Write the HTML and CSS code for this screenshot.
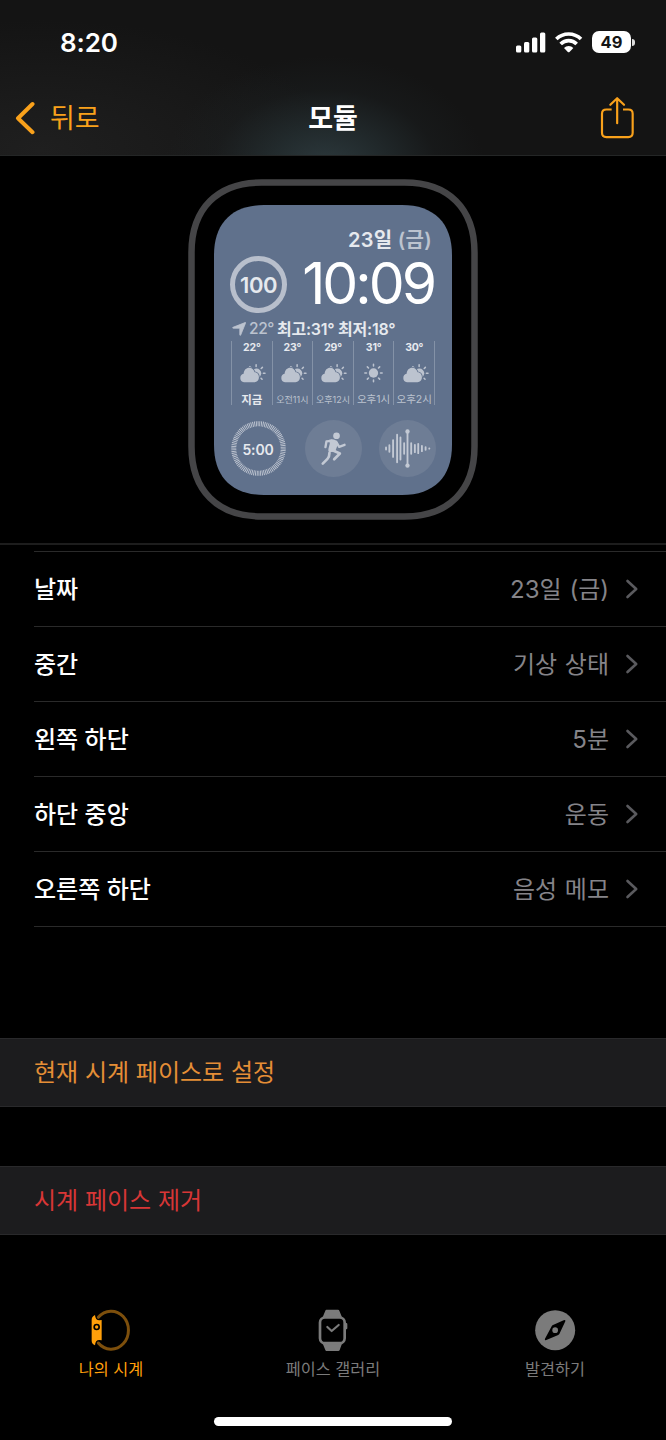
FILE: index.html
```html
<!DOCTYPE html>
<html lang="ko">
<head>
<meta charset="utf-8">
<title>모듈</title>
<link rel="stylesheet" href="styles.css">
</head>
<body>
<svg class="defs" width="0" height="0">
  <defs>
    <symbol id="cloud-sun" viewBox="178 68 82 60">
      <circle cx="231" cy="99" r="14.500" fill="currentColor"/>
      <g stroke="currentColor" stroke-width="4.600" stroke-linecap="round">
        <path d="M230 73v5M211 79l3.500 3.500M249 81l-3.500 3.500M257 99h-5M248 117l-3-3"/>
      </g>
      <path d="M193 126a13 13 0 0 1-1-25.500c1-12 8-18.500 17-18.500 8 0 14 5 16.500 14 8 0 13 7 13 15s-5.500 15-13.500 15z" fill="currentColor" stroke="#60718c" stroke-width="5" paint-order="stroke"/>
    </symbol>
    <symbol id="sun" viewBox="550 68 60 60">
      <circle cx="580" cy="98" r="14" fill="currentColor"/>
      <g stroke="currentColor" stroke-width="4.600" stroke-linecap="round">
        <path d="M580 72v5M580 119v5M554 98h5M601 98h5M561.500 79.500l3.500 3.500M595 113l3.500 3.500M598.500 79.500l-3.500 3.500M565 113l-3.500 3.500"/>
      </g>
    </symbol>
    <symbol id="chevron" viewBox="0 0 14 20">
      <path d="M2.500 2l8.700 8-8.700 8" fill="none" stroke="currentColor" stroke-width="2.600" stroke-linecap="round" stroke-linejoin="round"/>
    </symbol>
  </defs>
</svg>

<div class="screen">
  <header class="top">
    <div class="status">
      <span class="clock">8:20</span>
      <div class="indicators">
        <svg class="signal" viewBox="0 0 30 21">
          <g fill="#fff"><rect x="0" y="13.500" width="5.300" height="7" rx="1.500"/><rect x="8" y="10" width="5.300" height="10.500" rx="1.500"/><rect x="16" y="5.500" width="5.300" height="15" rx="1.500"/><rect x="24" y="0.500" width="5.300" height="20" rx="1.500"/></g>
        </svg>
        <svg class="wifi" viewBox="665 92 84 66">
          <g fill="none" stroke="#fff" stroke-width="11">
            <path d="M669 116a53 53 0 0 1 74 0"/><path d="M682 131a34 34 0 0 1 48 0"/>
          </g>
          <path d="M692 143a19 19 0 0 1 28 0l-11.500 12q-2.500 2-5 0z" fill="#fff"/>
        </svg>
        <div class="battery"><span class="level">49</span><i class="cap"></i></div>
      </div>
    </div>
    <nav class="nav">
      <div class="back">
        <svg class="back-icon" viewBox="0 0 20 34"><path d="M17.500 3L3 17.200l14.500 14" fill="none" stroke="currentColor" stroke-width="4" stroke-linecap="round" stroke-linejoin="round"/></svg>
        <span>뒤로</span>
      </div>
      <h1 class="title">모듈</h1>
      <svg class="share" viewBox="802 286 102 128">
        <g fill="none" stroke="currentColor" stroke-width="6.500" stroke-linecap="round" stroke-linejoin="round">
          <path d="M837 326h-16q-13 0-13 13v57q0 13 13 13h66q13 0 13-13v-57q0-13-13-13h-16" stroke-linecap="butt"/>
          <path d="M853.500 367v-74M833 312l20.500-20 20.500 20"/>
        </g>
      </svg>
    </nav>
  </header>

  <section class="preview">
    <div class="watch">
      <svg class="case" viewBox="0 0 290 341">
        <path d="M3.500 73.500C3.500 29.500 29.500 3.500 73.500 3.500H216.500C260.500 3.500 286.500 29.500 286.500 73.500V267.500C286.500 311.500 260.500 337.500 216.500 337.500H73.500C29.500 337.500 3.500 311.500 3.500 267.500Z" fill="#000" stroke="#454547" stroke-width="6.500"/>
        <path d="M26 76C26 44 44 26 76 26H214C246 26 264 44 264 76V266C264 298 246 316 214 316H76C44 316 26 298 26 266Z" fill="#60718c"/>
      </svg>
      <div class="face">
        <div class="date">23일 <span class="soft">(금)</span></div>
        <div class="hero">
          <div class="ring">100</div>
          <div class="time">10:09</div>
        </div>
        <div class="weather">
          <svg class="arrow" viewBox="0 0 14 14"><path d="M13 .6Q14 .2 13.500 1.200L8.700 13Q8 14 7.800 12.800V6.200H1.200Q0 6 1 5.300z" fill="currentColor" stroke="currentColor" stroke-width=".8" stroke-linejoin="round"/></svg>
          <span class="now">22°</span><span class="range">최고:31° 최저:18°</span>
        </div>
        <div class="hours">
          <div class="hour"><b>22°</b><svg class="wx"><use href="#cloud-sun"/></svg><span class="current">지금</span></div>
          <div class="hour"><b>23°</b><svg class="wx"><use href="#cloud-sun"/></svg><span class="small">오전11시</span></div>
          <div class="hour"><b>29°</b><svg class="wx"><use href="#cloud-sun"/></svg><span class="small">오후12시</span></div>
          <div class="hour"><b>31°</b><svg class="wx wx-sun"><use href="#sun"/></svg><span>오후1시</span></div>
          <div class="hour"><b>30°</b><svg class="wx"><use href="#cloud-sun"/></svg><span>오후2시</span></div>
        </div>
        <div class="dials">
          <div class="dial timer">
            <svg class="ticks" viewBox="0 0 56 56"><circle cx="28" cy="28" r="24.300" fill="none" stroke="currentColor" stroke-width="5" pathLength="90" stroke-dasharray=".5 .5"/></svg>
            <span class="timer-text">5:00</span>
          </div>
          <div class="dial disc">
            <svg viewBox="374 239 170 170">
              <circle cx="468" cy="286" r="10" fill="currentColor"/>
              <path d="M446 298q10-4 18 1 8 5 9 10l-7 19-1 5-19 2q-4-4-2-10l4-16z" fill="currentColor"/>
              <g fill="none" stroke="currentColor" stroke-width="7" stroke-linecap="round" stroke-linejoin="round">
                <path d="M452 301l-14 2-3 17"/><path d="M467 304l9 15 16-6"/>
                <path d="M456 329l22 10-17 17" stroke-width="8"/><path d="M447 337q0 12-6 18l-14 14" stroke-width="8"/>
              </g>
            </svg>
          </div>
          <div class="dial disc">
            <svg viewBox="597 239 170 170">
              <g stroke="currentColor" stroke-width="5.500" stroke-linecap="round">
                <path d="M618 321v6M628 314v20M639 299v50M651 283v82M661 291v66M672 308v32M693 308v32M704 313v22M714 310v28M725 316v16M736 320v8M747 323.500v1"/>
                <path d="M682 272v104"/>
              </g>
              <circle cx="682" cy="273" r="6.500" fill="currentColor"/><circle cx="682" cy="375" r="6.500" fill="currentColor"/>
            </svg>
          </div>
        </div>
      </div>
    </div>
  </section>

  <ul class="list">
    <li class="row"><span class="name">날짜</span><span class="value">23일 (금)</span><svg class="chev"><use href="#chevron"/></svg></li>
    <li class="row"><span class="name">중간</span><span class="value">기상 상태</span><svg class="chev"><use href="#chevron"/></svg></li>
    <li class="row"><span class="name">왼쪽 하단</span><span class="value">5분</span><svg class="chev"><use href="#chevron"/></svg></li>
    <li class="row"><span class="name">하단 중앙</span><span class="value">운동</span><svg class="chev"><use href="#chevron"/></svg></li>
    <li class="row"><span class="name">오른쪽 하단</span><span class="value">음성 메모</span><svg class="chev"><use href="#chevron"/></svg></li>
  </ul>

  <div class="action set">현재 시계 페이스로 설정</div>
  <div class="action remove">시계 페이스 제거</div>

  <footer class="tabs">
    <div class="tab active">
      <svg class="tab-icon" viewBox="90 57 126 129">
        <path d="M115 82a52 57 0 1 1 0 77" fill="none" stroke="#7d4f0c" stroke-width="9" stroke-linecap="round"/>
        <path d="M105 75q1 16 13 16l7-1v61l-7-1q-12 0-13 16-10-5-10-14V89q0-9 10-14z" fill="currentColor"/>
        <circle cx="110" cy="111" r="7.500" fill="currentColor" stroke="#000" stroke-width="5"/>
      </svg>
      <span>나의 시계</span>
    </div>
    <div class="tab">
      <svg class="tab-icon" viewBox="757 57 126 129">
        <path d="M800 59h35q3 0 4 3l9 22h-60l9-22q1-3 3-3zM788 158h60l-8 22q-1 3-4 3h-36q-2 0-3-3zM857 99h3q3 0 3 4v11q0 4-3 4h-3z" fill="currentColor"/>
        <rect x="781" y="82.500" width="74" height="77" rx="15" fill="#000" stroke="currentColor" stroke-width="8"/>
        <path d="M803 111l13 12 21-18" fill="none" stroke="currentColor" stroke-width="6.500" stroke-linecap="round" stroke-linejoin="round"/>
      </svg>
      <span>페이스 갤러리</span>
    </div>
    <div class="tab">
      <svg class="tab-icon" viewBox="461 57 126 129">
        <circle cx="524.500" cy="120.500" r="60" fill="currentColor"/>
        <path d="M555 94q1-6-5-3l-32 14q-3 1-4 4l-20 37q-2 6 4 4l34-14q3-1 5-4z" fill="#000"/>
        <circle cx="524.500" cy="120.500" r="8.500" fill="currentColor"/>
      </svg>
      <span>발견하기</span>
    </div>
  </footer>
  <div class="home"></div>
</div>
</body>
</html>
```

FILE: styles.css
```css
* { box-sizing: border-box; }

body {
  margin: 0;
  background: #000;
  color: #fff;
  font-family: Inter, "Noto Sans CJK KR", sans-serif;
}

.defs { position: absolute; }
svg { display: block; flex: none; }

.screen {
  width: 666px;
  height: 1440px;
  display: flex;
  flex-direction: column;
  overflow: hidden;
}

/* Status bar and navigation */
.top {
  height: 156px;
  flex: none;
  border-bottom: 1px solid #242626;
  background:
    radial-gradient(ellipse 160px 112px at 325px 168px, #2d3a3e 0%, rgba(38, 49, 52, .75) 35%, rgba(30, 36, 38, .3) 70%, rgba(20, 20, 20, 0) 100%),
    radial-gradient(ellipse 300px 130px at 40px 150px, #1f1f1f, rgba(20, 20, 20, 0)),
    #141414;
}

.status {
  height: 84px;
  padding: 0 31px 0 60px;
  display: flex;
  align-items: center;
  justify-content: space-between;
}

.clock { font-size: 26px; font-weight: 600; line-height: 32px; letter-spacing: -.1px; padding-top: 1px; }
.indicators { display: flex; align-items: center; }
.signal { width: 30px; height: 21px; margin-right: 9px; }
.wifi { width: 28px; height: 22px; margin-right: 9px; }
.battery { display: flex; align-items: center; gap: 1px; }
.level {
  width: 39px; height: 22px; border-radius: 7px;
  background: #fff; color: #141414;
  font-size: 16.500px; font-weight: 700; line-height: 22px; text-align: center;
}
.cap { width: 3px; height: 7px; border-radius: 0 3px 3px 0; background: #ddd; }

.nav {
  height: 68px;
  padding: 0 32px 0 15px;
  display: grid;
  grid-template-columns: 1fr auto 1fr;
  align-items: center;
}
.back { display: flex; align-items: center; gap: 15px; color: #f9a11b; font-size: 27px; line-height: 36px; }
.back span { padding-top: 2px; }
.back-icon { width: 20px; height: 34px; }
.title { margin: 0; padding: 2px 0 0 17px; font-size: 27px; font-weight: 700; line-height: 36px; }
.share { width: 34px; height: 43px; justify-self: end; color: #f9a11b; margin-bottom: 2px; }

/* Watch preview */
.preview {
  height: 389px;
  flex: none;
  padding-top: 23px;
  border-bottom: 2px solid #1d1d1d;
  display: flex;
  justify-content: center;
  align-items: flex-start;
}
.watch { width: 290px; height: 341px; display: grid; }
.case { grid-area: 1 / 1; width: 290px; height: 341px; }
.face {
  grid-area: 1 / 1;
  width: 238px; height: 290px;
  margin: 26px 0 0 26px;
  padding: 22px 16px 0;
  display: flex;
  flex-direction: column;
  color: #e6e9ee;
}
.soft { color: #bcc3cf; }
.date { height: 27px; line-height: 27px; padding-right: 4px; text-align: right; font-size: 20px; font-weight: 600; letter-spacing: .3px; }
.hero { height: 60px; display: flex; justify-content: space-between; align-items: center; }
.ring {
  width: 57px; height: 57px; border: 5.500px solid #b8bfcc; border-radius: 50%;
  display: flex; align-items: center; justify-content: center;
  font-size: 22px; font-weight: 600; letter-spacing: -.5px; padding-top: 1px;
}
.time { color: #fff; font-size: 57px; font-weight: 400; line-height: 56px; letter-spacing: -3px; margin-right: 2px; }
.weather { height: 26px; padding: 4px 0 0 2px; display: flex; align-items: center; font-size: 16px; line-height: 20px; white-space: nowrap; }
.arrow { width: 14px; height: 14px; margin-right: 3px; color: #bcc3cf; }
.now { color: #bcc3cf; font-size: 15.500px; font-weight: 500; letter-spacing: -.4px; margin-right: 3px; }
.range { font-weight: 600; letter-spacing: -.25px; }

.hours { display: flex; width: 204px; height: 64px; margin: 1px 0 0 1px; border-right: 1px solid #8492a7; }
.hour {
  flex: 1 1 0; min-width: 0; height: 64px;
  border-left: 1px solid #8492a7;
  display: flex; flex-direction: column; align-items: center;
  font-size: 10.500px; color: #bcc3cf; white-space: nowrap;
}
.hour b { font-size: 10.500px; font-weight: 700; line-height: 14px; color: #e6e9ee; letter-spacing: -.2px; }
.wx { width: 27px; height: 20px; margin: 8px 0 9px 2px; }
.wx-sun { margin-left: 0; }
.hour span { line-height: 16px; }
.hour .small { font-size: 9px; }
.hour .current { font-size: 11.500px; font-weight: 600; color: #e6e9ee; }

.dials { display: flex; justify-content: space-between; margin-top: 14.500px; }
.dial { width: 57px; height: 57px; display: grid; place-items: center; color: #c3c9d4; }
.dial > * { grid-area: 1 / 1; }
.dial svg { width: 57px; height: 57px; }
.disc { border-radius: 50%; background: #6e7d95; }
.timer-text { color: #e6e9ee; font-size: 14px; font-weight: 600; padding: 2px 1px 0 0; letter-spacing: -.2px; }

/* Complication rows */
.list {
  list-style: none;
  margin: 6px 0 0 34px;
  padding: 0;
  border-top: 1px solid #2a2a2a;
  flex: none;
}
.row {
  height: 75px;
  padding-right: 27px;
  border-bottom: 1px solid #2a2a2a;
  display: flex;
  align-items: center;
  font-size: 24px;
  line-height: 36px;
}
.name { flex: 1; font-weight: 500; padding-top: 2px; }
.value { color: #858489; margin-right: 16px; padding-top: 2px; word-spacing: 1px; }
.chev { width: 14px; height: 20px; color: #5a5a5e; }

/* Actions */
.action {
  height: 69px;
  flex: none;
  padding-left: 34px;
  border: solid #29292b;
  border-width: 1px 0;
  background: #1c1c1e;
  font-size: 24px;
  line-height: 67px;
}
.set { margin-top: 111px; color: #e58e36; }
.remove { margin-top: 59px; color: #d83636; }

/* Tab bar */
.tabs { display: flex; height: 108px; margin-top: 74px; flex: none; }
.tab { flex: 1 1 0; display: flex; flex-direction: column; align-items: center; color: #7b7b7b; font-size: 16.300px; line-height: 24px; }
.tab-icon { width: 42px; height: 43px; margin-bottom: 5px; }
.tab.active { color: #ff9f0a; }
.home { width: 238px; height: 9px; border-radius: 5px; background: #fff; margin: 0 auto; flex: none; }
```
